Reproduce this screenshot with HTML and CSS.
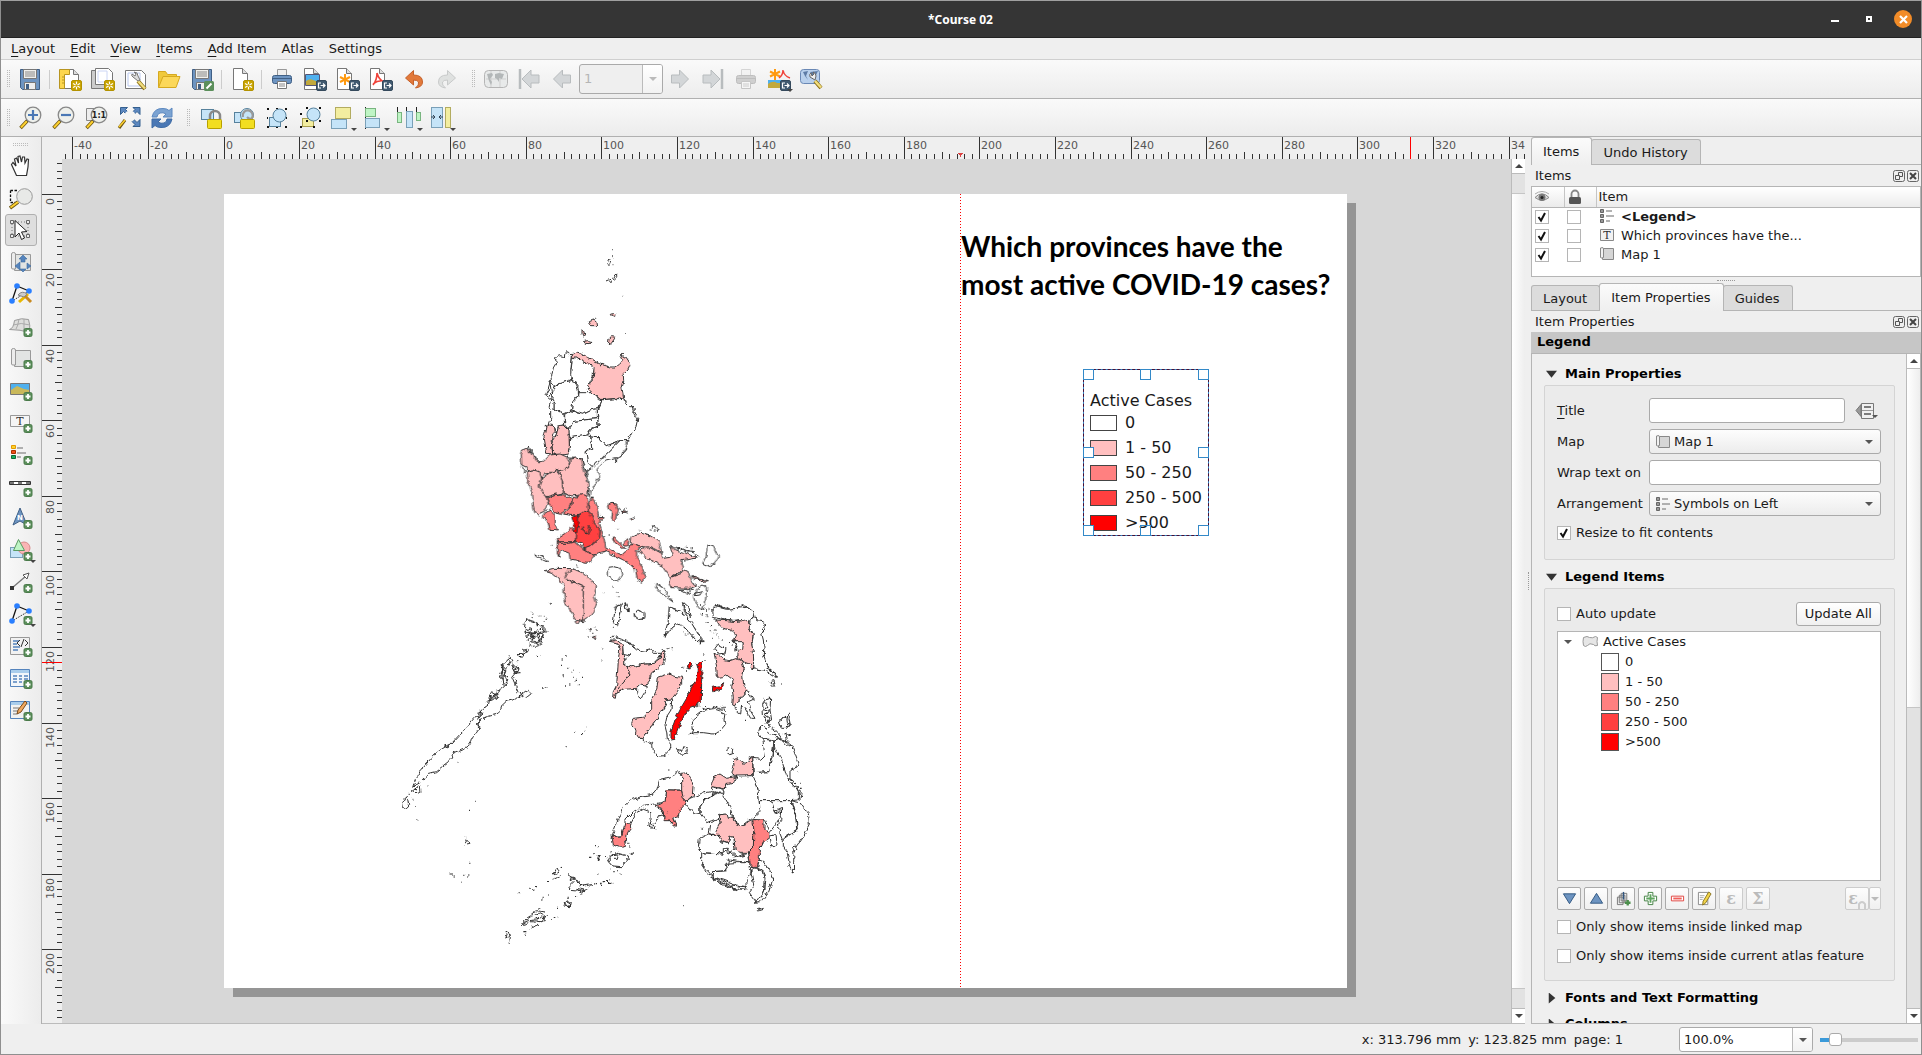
FILE: index.html
```html
<!DOCTYPE html>
<html lang="en">
<head>
<meta charset="utf-8">
<title>*Course 02</title>
<link rel="stylesheet" href="styles.css">
</head>
<body>
<svg class="defs" aria-hidden="true">
  <defs>
    <filter id="coast" x="0" y="0" width="100%" height="100%" color-interpolation-filters="sRGB"><feTurbulence type="fractalNoise" baseFrequency=".18" numOctaves="2" seed="4"/><feDisplacementMap in="SourceGraphic" scale="5" xChannelSelector="R" yChannelSelector="G"/></filter>
    <symbol id="plus" viewBox="0 0 9 9"><rect x=".5" y=".5" width="8" height="8" rx="1.5" fill="#5b8f5b" stroke="#4a7a4a"/><path d="M4.500 2v5M2 4.500h5" stroke="#fff" stroke-width="1.800"/></symbol>
    <symbol id="star" viewBox="0 0 11 11"><rect x=".5" y=".5" width="10" height="10" rx="1.500" fill="#c9a400" stroke="#b39200"/><path d="M5.500 1.500v8M2 3.500l7 4M9 3.500l-7 4" stroke="#fff" stroke-width="1.200"/><circle cx="5.500" cy="5.500" r="1.200" fill="#c9a400"/></symbol>
    <symbol id="export" viewBox="0 0 11 11"><rect x=".5" y=".5" width="10" height="10" rx="1.500" fill="#415a70" stroke="#34495c"/><path d="M5 3H2.500v5H5M4.500 5.500h4M7 3.500l2 2-2 2" stroke="#fff" fill="none" stroke-width="1.200"/></symbol>
    <symbol id="floppy" viewBox="0 0 24 24"><path d="M2.500 2.500h19v20h-17l-2-2z" fill="#6d94c1" stroke="#3f5f85"/><path d="M5.500 2.500h13v9h-13z" fill="#f0f0ec" stroke="#777"/><path d="M7 5h10M7 7h10M7 9h10" stroke="#888"/><path d="M6.500 15.500h11v7h-11z" fill="#eee" stroke="#777"/><path d="M8 17h3v5H8z" fill="#3f5f85"/></symbol>
    <symbol id="sheet" viewBox="0 0 24 24"><path d="M3.500 2.500h12l5 5v14h-17z" fill="#fff" stroke="#777"/><path d="M15.500 2.500v5h5" fill="#ddd" stroke="#777"/></symbol>
    <symbol id="page" viewBox="0 0 24 24"><path d="M4.500 1.500h9l5 5v16h-14z" fill="#fff" stroke="#777"/><path d="M13.500 1.500v5h5" fill="#ddd" stroke="#777"/></symbol>
    <symbol id="printer" viewBox="0 0 24 24"><path d="M7.500 2.500h9v7h-9z" fill="#eee" stroke="#999"/><rect x="2.500" y="8.500" width="19" height="8" rx="2" fill="#6d94c1" stroke="#3f5f85"/><path d="M3 11.500h18" stroke="#3f5f85"/><path d="M7.500 14.500h9v7h-9z" fill="#fff" stroke="#777"/><path d="M9 17h6M9 19h6" stroke="#888"/></symbol>
    <symbol id="lens" viewBox="0 0 24 24"><path d="M10 14l-7.500 8" stroke="#6b5310" stroke-width="3.500"/><path d="M9 15l-6 6.500" stroke="#fcd030" stroke-width="2"/><path d="M11 13l-2 2" stroke="#222" stroke-width="3"/><circle cx="15" cy="9" r="7.800" fill="#eef0ec" stroke="#888" stroke-width="1.300"/></symbol>
    <symbol id="lock" viewBox="0 0 24 24"><rect x="2.500" y="3.500" width="12" height="10" fill="#c5e4f8" stroke="#56819c"/><path d="M11 14V10a5 5 0 0 1 10 0v4" fill="none" stroke="#888" stroke-width="2.500"/><rect x="8.500" y="13.500" width="14" height="9" rx="1" fill="#f2de20" stroke="#b8a000"/></symbol>
    <symbol id="unlock" viewBox="0 0 24 24"><rect x="2.500" y="6.500" width="9" height="10" fill="#c5e4f8" stroke="#56819c"/><circle cx="15" cy="9" r="6.500" fill="#c5e4f8" stroke="#56819c"/><path d="M11 11a5 5 0 1 1 9 1q-2 2-5-1" fill="none" stroke="#999" stroke-width="2.200"/><rect x="8.500" y="13.500" width="14" height="9" rx="1" fill="#f2de20" stroke="#b8a000"/></symbol>
    <symbol id="nodes" viewBox="0 0 24 24"><path d="M3 19L8 4l12 5" fill="none" stroke="#111" stroke-width="1.300"/><path d="M20 9L3 19" stroke="#111" stroke-dasharray="1 1"/><g fill="#2a7fff"><circle cx="3" cy="19" r="2.800"/><circle cx="8" cy="4" r="2.800"/><circle cx="20" cy="9" r="2.800"/></g></symbol>
    <symbol id="scroll" viewBox="0 0 24 24"><path d="M5.500 4.500h16v16h-16z" fill="#e2e4e3" stroke="#999"/><path d="M2.500 4q0-1.500 2-1.500t2 1.500v15H4q-1.500 0-1.500-1z" fill="#ececec" stroke="#999"/></symbol>
    <symbol id="map16" viewBox="0 0 16 16"><path d="M3.500 2.500h11v11h-11z" fill="#d6d6d6" stroke="#888"/><path d="M1.500 2q3-1.500 3 1v8.500q-2 1-3 0z" fill="#f2f2f2" stroke="#888"/></symbol>
    <symbol id="legend16" viewBox="0 0 16 16"><g fill="#999" stroke="#666"><path d="M1.500 1.500h3v3h-3zM1.500 6.500h3v3h-3zM1.500 11.500h3v3h-3z"/></g><path d="M7 3h6M7 8h8M7 13h4" stroke="#999" stroke-width="1.600"/></symbol>
    <symbol id="first" viewBox="0 0 24 24"><path d="M3 2v20" stroke="#b8bcbe" stroke-width="2.500"/><path d="M5 12l9-9v5h8v8h-8v5z" fill="#d3d6d8" stroke="#b8bcbe"/></symbol>
    <symbol id="prev" viewBox="0 0 24 24"><path d="M3.500 12l9-9v5h8v8h-8v5z" fill="#d3d6d8" stroke="#b8bcbe"/></symbol>
    <symbol id="world" viewBox="0 0 24 24"><rect x=".5" y="3.500" width="23" height="17" rx="4" fill="#e8eaea" stroke="#b5b5b5"/><path d="M2 12h20M7 4v16M16 4v16" stroke="#cfcfcf"/><path d="M3 7l5-1 1 2-3 4 2 3-1 3-2-4zM11 7l4-1 5 1-2 5-3-1 0 4-2-3-2-1z" fill="#b3b7b8"/></symbol>
    <symbol id="float" viewBox="0 0 12 12"><rect x=".5" y=".5" width="11" height="11" rx="2" fill="none" stroke="#666"/><path d="M5.500 5V2.500h4v4H7M2.500 5.500h4v4h-4z" fill="none" stroke="#555"/></symbol>
    <symbol id="close" viewBox="0 0 12 12"><rect x=".5" y=".5" width="11" height="11" rx="2" fill="none" stroke="#666"/><path d="M3 3l6 6M9 3l-6 6" stroke="#444" stroke-width="2"/></symbol>
  </defs>
</svg>

<div class="window">
  <header class="titlebar">
    <span class="titlebar-text">*Course 02</span>
    <div class="titlebar-buttons">
      <button class="wbtn" aria-label="Minimize"><svg width="8" height="8"><path d="M0 6h8" stroke="#fff" stroke-width="2"/></svg></button>
      <button class="wbtn" aria-label="Maximize"><svg width="6" height="6"><path d="M1 1h4v4H1z" fill="none" stroke="#fff" stroke-width="2"/></svg></button>
      <button class="wbtn wbtn-close" aria-label="Close"><svg width="9" height="9"><path d="M1 1l7 7M8 1L1 8" stroke="#fff" stroke-width="2.200"/></svg></button>
    </div>
  </header>

  <nav class="menubar">
    <button><u>L</u>ayout</button><button><u>E</u>dit</button><button><u>V</u>iew</button><button><u>I</u>tems</button><button><u>A</u>dd Item</button><button>Atlas</button><button>Settings</button>
  </nav>

  <div class="toolbar">
    <span class="grip"></span>
    <button class="tool" aria-label="Save Project"><svg><use href="#floppy"/></svg></button>
    <span class="sep"></span>
    <button class="tool" aria-label="New Layout"><svg viewBox="0 0 24 24"><use href="#sheet" width="24" height="24"/><path d="M1.500 2.500h10v5h-5v14h-5z" fill="#fcd64e" stroke="#b89520"/><path d="M4 10h2M4 13h2M4 16h2" stroke="#b89520"/><use href="#star" x="13" y="13" width="11" height="11"/></svg></button>
    <button class="tool" aria-label="Duplicate Layout"><svg viewBox="0 0 24 24"><path d="M.5 3.500h17v18H.500z" fill="#ccc" stroke="#777"/><path d="M4.500 1.500h13l4 4v12h-17z" fill="#fff" stroke="#777"/><path d="M7 4h9v11H7z" fill="none" stroke="#ccd6f5"/><use href="#star" x="13" y="13" width="11" height="11"/></svg></button>
    <button class="tool" aria-label="Layout Manager"><svg viewBox="0 0 24 24"><path d="M1.500 3.500h16l4 4v14h-20z" fill="#fff" stroke="#777"/><path d="M4 6h12v13H4z" fill="none" stroke="#b9c8ee"/><path d="M14 14l7 8" stroke="#8a6d10" stroke-width="4"/><path d="M14 14l7 7.500" stroke="#f1dd7d" stroke-width="2.500"/><path d="M14 14L9 10q-2-1-1-3l3 2 1-2-2-2q4 0 4 4l2 4z" fill="#ddd" stroke="#777"/></svg></button>
    <button class="tool" aria-label="Add Items from Template"><svg viewBox="0 0 24 24"><path d="M1.500 20.500v-16h7l2 3h9v4" fill="#f0c93c" stroke="#d6a920"/><path d="M1.500 20.500L6 9.500h17l-4 11z" fill="#fcd85a" stroke="#d6a920"/></svg></button>
    <button class="tool" aria-label="Save as Template"><svg viewBox="0 0 24 24"><use href="#floppy" width="24" height="24"/><rect x="14" y="14" width="10" height="10" rx="1.500" fill="#5b8f5b"/><path d="M16.500 21.500l5-5" stroke="#fff" stroke-width="2"/></svg></button>
    <span class="sep"></span>
    <button class="tool" aria-label="Add Pages"><svg viewBox="0 0 24 24"><use href="#page" x="-1" width="24" height="24"/><use href="#star" x="13" y="13" width="11" height="11"/></svg></button>
    <span class="sep"></span>
    <button class="tool" aria-label="Print"><svg><use href="#printer"/></svg></button>
    <button class="tool" aria-label="Export as Image"><svg viewBox="0 0 24 24"><use href="#page" x="-3" width="24" height="24"/><path d="M3 8h13v10H3z" fill="#4fb0ee"/><path d="M3 14q4-3 7-1l6 2v3H3z" fill="#c2a93c"/><path d="M2.500 7.500h14v11h-14z" fill="none" stroke="#557"/><use href="#export" x="13" y="13" width="11" height="11"/></svg></button>
    <button class="tool" aria-label="Export as SVG"><svg viewBox="0 0 24 24"><use href="#page" x="-3" width="24" height="24"/><path d="M9 7v11M4 10l10 5M14 10L4 15" stroke="#ff9a10" stroke-width="2"/><use href="#export" x="13" y="13" width="11" height="11"/></svg></button>
    <button class="tool" aria-label="Export as PDF"><svg viewBox="0 0 24 24"><use href="#page" x="-3" width="24" height="24"/><path d="M8 6q2 7 7 9M8 6q0 7-4 12M4 17q5-4 11-3" fill="none" stroke="#f0433a" stroke-width="1.600"/><use href="#export" x="13" y="13" width="11" height="11"/></svg></button>
    <button class="tool" aria-label="Undo"><svg viewBox="0 0 24 24"><path d="M3.500 11l8-7.500V8q9 0 9 7 0 5-7 6 4-3 3-6-1-2-5-2v5z" fill="#e2793a" stroke="#c5602a"/></svg></button>
    <button class="tool" aria-label="Redo" disabled><svg viewBox="0 0 24 24"><path d="M20.500 11l-8-7.500V8q-9 0-9 7 0 5 7 6-4-3-3-6 1-2 5-2v5z" fill="#dfe1e0" stroke="#c8caca"/></svg></button>
    <span class="grip grip-wide"></span>
    <button class="tool" aria-label="Preview Atlas" disabled><svg><use href="#world"/></svg></button>
    <button class="tool" aria-label="First Feature" disabled><svg><use href="#first"/></svg></button>
    <button class="tool" aria-label="Previous Feature" disabled><svg><use href="#prev"/></svg></button>
    <div class="combo combo-off"><input class="combo-input" value="1" aria-label="Atlas page" disabled><button class="combo-arrow" aria-label="Pages" disabled></button></div>
    <button class="tool" aria-label="Next Feature" disabled><svg class="flip"><use href="#prev"/></svg></button>
    <button class="tool" aria-label="Last Feature" disabled><svg class="flip"><use href="#first"/></svg></button>
    <button class="tool faded" aria-label="Print Atlas" disabled><svg><use href="#printer"/></svg></button>
    <button class="tool drop" aria-label="Export Atlas"><svg viewBox="0 0 24 24"><path d="M8 2v11M3 4.500l10 5M13 4.500l-10 5" stroke="#ff9a10" stroke-width="2"/><path d="M16 3q1 6 7 8M16 3q0 5-4 8" fill="none" stroke="#f0433a" stroke-width="1.500"/><path d="M1 13h16v8H1z" fill="#4fb0ee"/><path d="M1 17q5-4 9-1h7v5H1z" fill="#c2a93c"/><use href="#export" x="13" y="13" width="11" height="11"/></svg></button>
    <button class="tool" aria-label="Atlas Settings"><svg viewBox="0 0 24 24"><rect x=".5" y="2.500" width="19" height="14" rx="3" fill="#b9d0ec" stroke="#6a88b5"/><path d="M3 5l5-1-2 5 2 4-3-4zM10 5l8-1-3 6-3-2z" fill="#5d7ba5"/><path d="M15 14l6 7" stroke="#8a6d10" stroke-width="4"/><path d="M15 14l6 6.500" stroke="#f1dd7d" stroke-width="2.500"/><path d="M15 13l-5-3q-1-3 1-4l1 3 2-2-1-2q3 1 3 4z" fill="#eee" stroke="#666"/></svg></button>
  </div>

  <div class="toolbar toolbar-view">
    <span class="grip"></span>
    <button class="tool" aria-label="Zoom In"><svg viewBox="0 0 24 24"><use href="#lens" width="24" height="24"/><path d="M15 4v10M10 9h10" stroke="#4a78b5" stroke-width="2.200"/></svg></button>
    <button class="tool" aria-label="Zoom Out"><svg viewBox="0 0 24 24"><use href="#lens" width="24" height="24"/><path d="M10 9h10" stroke="#4a78b5" stroke-width="2.200"/></svg></button>
    <button class="tool" aria-label="Zoom to 100%"><svg viewBox="0 0 24 24"><path d="M2.500 2.500h9v12h-9z" fill="#eee" stroke="#888"/><use href="#lens" width="24" height="24"/><text x="15" y="12" text-anchor="middle" class="icon-text">1:1</text></svg></button>
    <button class="tool" aria-label="Zoom Full"><svg viewBox="0 0 24 24"><path d="M3.500 1.500h7l-2 2 3 3-2 2-3-3-3 3zM23 1.500h-7l2 2-3 3 2 2 3-3 3 3zM23 20.500h-7l2-2-3-3 2-2 3 3 3-3z" fill="#5c88c0" stroke="#35608f"/><path d="M8 14l-6 8" stroke="#6b5310" stroke-width="3"/><path d="M8 14l-6 7" stroke="#fcd030" stroke-width="1.600"/><circle cx="13" cy="10" r="5.500" fill="#f5f5f3"/></svg></button>
    <button class="tool" aria-label="Refresh"><svg viewBox="0 0 24 24"><path d="M2 11Q4 2 13 2.500q4 0 6 2L22 2v9h-9l3-3q-3-2-6-1-3 1-3 4z" fill="#7ba3d2" stroke="#5c88c0"/><path d="M22 13q-2 9-11 8.500-4 0-6-2L2 22v-9h9l-3 3q3 2 6 1 3-1 3-4z" fill="#4a78b5" stroke="#3d6ba5"/></svg></button>
    <span class="grip grip-wide"></span>
    <button class="tool" aria-label="Lock Items"><svg><use href="#lock"/></svg></button>
    <button class="tool" aria-label="Unlock Items"><svg><use href="#unlock"/></svg></button>
    <button class="tool" aria-label="Group"><svg viewBox="0 0 24 24"><rect x="4.500" y="11.500" width="11" height="9" fill="#c5e4f8" stroke="#56819c"/><circle cx="14.500" cy="9.500" r="6.500" fill="#c5e4f8" stroke="#56819c"/><path d="M2 2h2v2H2zM20 2h2v2h-2zM2 20h2v2H2zM20 20h2v2h-2zM2 11h1v2H2zM21 11h1v2h-1zM11 2h2v1h-2zM11 21h2v1h-2z" fill="#111"/></svg></button>
    <button class="tool" aria-label="Ungroup"><svg viewBox="0 0 24 24"><rect x="4.500" y="12.500" width="11" height="8" fill="#f3eea0" stroke="#aaa050"/><circle cx="15.500" cy="8.500" r="6.500" fill="#c5e4f8" stroke="#56819c"/><path d="M8 1h2v2H8zM21 1h2v2h-2zM8 14h2v2H8zM21 14h2v2h-2zM2 7h2v2H2zM2 20h2v2H2zM15 20h2v2h-2z" fill="#111"/></svg></button>
    <button class="tool drop" aria-label="Raise"><svg viewBox="0 0 24 24"><rect x=".5" y="13.500" width="15" height="9" fill="#c5e4f8" stroke="#7aa0b8"/><rect x="4.500" y="1.500" width="15" height="11" fill="#f3eea0" stroke="#b3ac60"/></svg></button>
    <button class="tool drop" aria-label="Align"><svg viewBox="0 0 24 24"><path d="M1.500 1v22" stroke="#222"/><rect x="1.500" y="2.500" width="10" height="8" fill="#bff5c5" stroke="#79b580"/><rect x="1.500" y="12.500" width="14" height="9" fill="#c5e4f8" stroke="#7aa0b8"/></svg></button>
    <button class="tool drop" aria-label="Distribute"><svg viewBox="0 0 24 24"><path d="M.5 1v12M9.500 1v10M19.500 1v12" stroke="#222"/><rect x=".5" y="6.500" width="4" height="10" fill="#bff5c5" stroke="#79b580"/><rect x="9.500" y="5.500" width="6" height="16" fill="#c5e4f8" stroke="#7aa0b8"/><rect x="19.500" y="6.500" width="4" height="8" fill="#bff5c5" stroke="#79b580"/></svg></button>
    <button class="tool drop" aria-label="Resize"><svg viewBox="0 0 24 24"><rect x="1.500" y="1.500" width="11" height="20" fill="#c5e4f8" stroke="#7aa0b8"/><path d="M1 11h3M13 11h-3M3 9l2 2-2 2M11 9l-2 2 2 2" stroke="#345" fill="none"/><rect x="15.500" y="1.500" width="5" height="20" fill="#f3eea0" stroke="#b3ac60"/></svg></button>
  </div>

  <main class="main">
    <aside class="toolbox">
      <span class="grip grip-flat"></span>
      <button class="tool" aria-label="Pan"><svg viewBox="0 0 24 24"><path d="M7.500 21.500L5 16 2.500 10.500 4 8.500l3 3.500L5.500 5l2-1 2 5-.5-6.500 2-.500L12.500 8l1-5h2l.5 6 2-4 1.500.5q0 7-2 16z" fill="#fff" stroke="#333" stroke-width="1.200"/></svg></button>
      <button class="tool" aria-label="Zoom"><svg viewBox="0 0 24 24"><path d="M1.500 4.500h7M1.500 4.500v12h5" fill="none" stroke="#111" stroke-width="1.300" stroke-dasharray="2.500 1.500"/><path d="M9 16l-8 6" stroke="#6b5310" stroke-width="3.500"/><path d="M9 16l-7.500 5.500" stroke="#fcd030" stroke-width="2"/><circle cx="15.500" cy="10.500" r="7.800" fill="#e8e9e7" stroke="#999"/></svg></button>
      <button class="tool tool-on" aria-label="Select/Move Item"><svg viewBox="0 0 24 24"><path d="M3 4h16v14H3z" fill="none" stroke="#777" stroke-dasharray="1 2"/><path d="M1.500 2.500h3v3h-3zM17.500 2.500h3v3h-3zM1.500 16.500h3v3h-3zM17.500 16.500h3v3h-3z" fill="#eee" stroke="#666"/><path d="M6 2.500l12 11-5.500.5 3 6-3 1.500-2.500-6.500-4 4z" fill="#fff" stroke="#222"/></svg></button>
      <button class="tool" aria-label="Move Content"><svg viewBox="0 0 24 24"><use href="#scroll" width="24" height="24"/><path d="M14 5l4 4h-2v3h-4V9h-2zM6 16l5-4v8zM22 16l-4-3v6zM14 22l3-3h-6z" fill="#5584bd" stroke="#3b6a9d" stroke-width=".6"/></svg></button>
      <button class="tool" aria-label="Edit Nodes"><svg viewBox="0 0 24 24"><use href="#nodes" width="24" height="24"/><path d="M10 20l9-8" stroke="#e8b800" stroke-width="3"/><path d="M14 12l8 8" stroke="#c88a20" stroke-width="3"/><path d="M9 13q4-5 9-1l-3 3z" fill="#ccc" stroke="#888"/></svg></button>
      <button class="tool" aria-label="Add Map"><svg viewBox="0 0 24 24"><path d="M.5 15.500q4-1 5-9 7-3 14-1 2 5 1 13-9-3-20-3z" fill="#dededc" stroke="#999"/><path d="M4 11q8-3 17 0M10 5q-1 7-3 10M15 5v12" fill="none" stroke="#aaa"/><use href="#plus" x="14" y="14" width="10" height="9"/></svg></button>
      <button class="tool" aria-label="Add 3D Map"><svg viewBox="0 0 24 24"><use href="#scroll" width="24" height="24"/><use href="#plus" x="14" y="14" width="10" height="9"/></svg></button>
      <button class="tool" aria-label="Add Picture"><svg viewBox="0 0 24 24"><path d="M2 5h19v12H2z" fill="#4fb0ee"/><path d="M2 12l6-4 7 3 6 1v5H2z" fill="#c9b85a"/><path d="M1.500 5.500h19v11h-19z" fill="none" stroke="#777"/><use href="#plus" x="14" y="14" width="10" height="9"/></svg></button>
      <button class="tool" aria-label="Add Label"><svg viewBox="0 0 24 24"><path d="M1.500 5.500h19v11h-19z" fill="#f5f5f5" stroke="#999"/><text x="11" y="15" text-anchor="middle" class="icon-serif">T</text><use href="#plus" x="14" y="14" width="10" height="9"/></svg></button>
      <button class="tool" aria-label="Add Legend"><svg viewBox="0 0 24 24"><path d="M2.500 3.500h4v3h-4z" fill="#fbd32d" stroke="#e59a00"/><path d="M2.500 8.500h4v3h-4z" fill="#f0501a" stroke="#a83000"/><path d="M2.500 13.500h4v3h-4z" fill="#17ae60" stroke="#0d6a38"/><path d="M8 6h6M8 11h9M8 15h4" stroke="#999" stroke-width="1.500"/><use href="#plus" x="14" y="14" width="10" height="9"/></svg></button>
      <button class="tool" aria-label="Add Scale Bar"><svg viewBox="0 0 24 24"><path d="M.5 7.500h21v3H.500z" fill="#fff" stroke="#333"/><path d="M1 9h4M9 9h4M17 9h4" stroke="#777" stroke-width="2"/><use href="#plus" x="14" y="14" width="10" height="9"/></svg></button>
      <button class="tool" aria-label="Add North Arrow"><svg viewBox="0 0 24 24"><path d="M11 2l7 17-7-4-7 4z" fill="#6d94c1" stroke="#3f5f85"/><text x="11" y="14" text-anchor="middle" class="icon-n">N</text><use href="#plus" x="14" y="14" width="10" height="9"/></svg></button>
      <button class="tool drop" aria-label="Add Shape"><svg viewBox="0 0 24 24"><rect x="1.500" y="9.500" width="12" height="10" fill="#c5e4f8" stroke="#7aa0b8"/><circle cx="15" cy="10" r="6" fill="#fab5b5" stroke="#d98a8a"/><path d="M9.500 1.500l6 11h-11z" fill="#bff5c5" stroke="#5b9a62"/><use href="#plus" x="14" y="14" width="10" height="9"/></svg></button>
      <button class="tool" aria-label="Add Arrow"><svg viewBox="0 0 24 24"><path d="M3 18L17 6" stroke="#777" stroke-width="1.300"/><path d="M20 3l-2 6-4-4z" fill="#fff" stroke="#555"/><path d="M1 16h4v4H1z" fill="#333"/><use href="#plus" x="14" y="14" width="10" height="9"/></svg></button>
      <button class="tool drop" aria-label="Add Node Item"><svg viewBox="0 0 24 24"><use href="#nodes" width="24" height="24"/><use href="#plus" x="14" y="14" width="10" height="9"/></svg></button>
      <button class="tool" aria-label="Add HTML"><svg viewBox="0 0 24 24"><path d="M1.500 3.500h19v17h-19z" fill="#f2f2f2" stroke="#999"/><path d="M4 7h6M4 10h4M4 13h7M4 16h5" stroke="#5584bd" stroke-width="1.500"/><path d="M11 6l-3 3 3 3M16 6l3 3-3 3M15 5l-3 8" fill="none" stroke="#333"/><use href="#plus" x="14" y="14" width="10" height="9"/></svg></button>
      <button class="tool" aria-label="Add Fixed Table"><svg viewBox="0 0 24 24"><path d="M1.500 3.500h19v17h-19z" fill="#f2f6fa" stroke="#5584bd"/><path d="M2 4h18v3H2z" fill="#a9cdec"/><path d="M4 10h4M10 10h3M15 10h4M4 13h4M10 13h3M15 13h4M4 16h4M10 16h3" stroke="#5584bd" stroke-width="1.300"/><use href="#plus" x="14" y="14" width="10" height="9"/></svg></button>
      <button class="tool" aria-label="Add Attribute Table"><svg viewBox="0 0 24 24"><path d="M1.500 3.500h19v17h-19z" fill="#f2f2f2" stroke="#5584bd"/><path d="M2 4h18v3H2z" fill="#a9cdec"/><path d="M4 10h6M4 13h5M4 16h4" stroke="#777"/><path d="M16 3l-7 9-1 4 4-2 6-9z" fill="#f0a860" stroke="#7a4a1a"/><use href="#plus" x="14" y="14" width="10" height="9"/></svg></button>
    </aside>

    <section class="workspace">
      <div class="corner"></div>
      <svg class="ruler ruler-h" id="ruler-h" data-origin="162" data-cursor="1348"></svg>
      <svg class="ruler ruler-v" id="ruler-v" data-origin="35" data-cursor="503"></svg>
      <div class="canvas">
        <div class="paper">
          <svg class="map" viewBox="0 0 1123 794" width="1123" height="794" role="img" aria-label="Map of provinces">
            <g filter="url(#coast)">
            <!-- Northern Luzon -->
            <g transform="translate(276 36) scale(.33333)">
              <path class="c0" d="M168 381L180 377 193 380 195 370 201 365 208 374 217 373 216 390 214 405 213 420 215 435 210 452 190 458 175 462 165 470 158 462 150 458 157 448 155 435 160 418 168 405 170 394 166 390Z"/>
              <path class="c0" d="M217 385L228 379 240 388 258 396 275 403 284 412 280 425 280 435 265 466 275 488 255 492 237 490 232 486 234 462 215 452 212 430 215 405Z"/>
              <path class="c1" d="M217 373L230 367 245 370 262 382 300 402 330 411 348 411 362 400 368 388 362 380 366 372 372 381 377 380 388 396 390 407 384 420 370 433 371 455 366 475 371 503 340 506 306 509 285 498 275 488 263 466 275 455 281 435 282 412 275 405 240 388 228 380 219 387Z"/>
              <path class="c0" d="M210 452L228 460 234 475 236 497 225 504 220 518 215 535 210 545 188 553 180 545 168 543 162 535 162 522 155 510 158 485 165 470 185 460Z"/>
              <path class="c0" d="M150 458L158 462 165 470 158 485 155 510 162 520 162 537 175 545 192 553 194 585 176 588 168 612 160 590 148 585 152 565 152 545 147 530 152 510 140 500 138 490 144 478Z"/>
              <path class="c0" d="M236 497L237 488 275 488 285 500 306 509 294 535 270 540 250 550 215 540 218 515Z"/>
              <path class="c0" d="M194 553L212 542 250 550 270 540 292 536 292 566 250 570 218 575 213 590 205 597 194 585Z"/>
              <path class="c0" d="M205 597L213 590 218 575 255 570 292 566 295 587 270 600 262 616 210 624Z"/>
              <path class="c0" d="M306 509L371 505 376 520 386 530 399 530 404 538 401 550 407 560 414 562 408 590 395 610 383 632 360 632 317 649 290 620 272 618 265 607 295 588 292 540Z"/>
              <path class="c0" d="M272 618L290 620 317 649 360 632 278 712 262 700 258 665 275 655Z"/>
              <path class="c0" d="M208 624L262 615 272 622 275 655 258 665 262 695 278 712 258 727 246 686 207 684 203 672 208 655Z"/>
              <path class="c1" d="M148 585L160 586 163 610 155 638 158 672 140 670 136 645 132 620 138 590ZM175 587L192 585 207 600 208 650 203 672 180 676 158 670 155 640 168 620Z"/>
              <path class="c1" d="M268 275L280 270 288 275 290 287 272 287ZM334 250L341 248 347 254 342 259 335 256ZM325 342L327 326 335 320 347 322 342 330 332 342ZM250 335L262 332 280 335 270 341 256 340ZM246 300L250 301 254 312 250 320 246 312Z"/>
              <path class="c0" d="M320 100L326 88 333 90 328 103ZM338 146L345 134 350 132 350 140 342 149ZM319 152L326 150 334 155 328 158ZM150 460L154 485 147 500M396 528L400 540 410 556M360 672L372 656 376 640 377 662 360 682 346 695 355 676"/>
              <path class="dots" d="M337 59h2M335 77h3M338 104h2M365 199h2M285 265h2M373 310h2M248 322h2M365 378h2M300 404h3M84 647h3M92 660h3M98 670h3M106 685h3"/>
            </g>
            <!-- Central and southern Luzon, Mindoro, Bicol -->
            <g transform="translate(276 236) scale(.33333)">
              <path class="c0" d="M360 32L383 32 375 60 358 84 345 83 318 90 300 105 288 118 302 133 290 155 281 172 270 182 268 200 266 150 258 128 278 112Z"/>
              <path class="c1" d="M64 75L68 60 84 52 92 70 105 85 115 95 130 95 150 75 180 72 203 82 208 105 205 120 188 125 170 118 150 130 133 132 125 145 118 125 100 120 82 125 80 112 65 105Z"/>
              <path class="c1" d="M82 125L100 120 118 125 125 145 118 170 140 200 145 225 132 247 115 255 104 248 100 230 98 195 90 170 84 160Z"/>
              <path class="c1" d="M125 145L150 130 170 118 175 130 186 150 190 190 165 193 140 200 125 182 118 170Z"/>
              <path class="c1" d="M175 125L208 112 210 88 228 84 245 88 250 115 260 140 266 170 262 200 240 195 215 198 190 190 188 155Z"/>
              <path class="c2" d="M140 205L165 193 195 195 217 210 212 228 185 250 165 245 150 225Z"/>
              <path class="c2" d="M217 205L250 193 262 200 265 240 240 250 225 258 190 252 215 228Z"/>
              <path class="c2" d="M127 262L134 250 150 240 162 250 163 280 172 300 150 298 143 275Z"/>
              <path class="c2" d="M265 240L266 215 275 200 290 225 300 262 309 263 298 278 312 325 318 355 345 365 365 375 385 358 392 345 440 340 410 360 410 385 425 410 437 440 425 457 412 450 405 415 390 400 370 390 320 365 280 375 250 355 270 350 298 325 300 305 285 280Z"/>
              <path class="c2" d="M172 325L195 310 213 292 228 310 228 335 205 340 175 340ZM172 335L225 335 250 357 285 375 275 395 262 400 245 398 232 390 210 388 208 370 190 362 180 365 176 380 172 370Z"/>
              <path class="c3" d="M238 252L265 240 285 280 300 305 298 325 270 350 253 357 247 338 226 335 228 290 232 268Z"/>
              <path class="line" d="M246 300L250 290 256 312 262 310 266 290 271 292 268 310M226 310L228 300 236 288 246 300M222 302L232 300"/>
              <path class="c4" d="M215 262L236 255 235 275 230 307 220 302 222 280Z"/>
              <path class="c2" d="M323 225L335 220 350 222 355 240 350 265 342 272 335 265 338 248 325 238ZM362 240L378 250 368 250ZM388 266L402 260 394 267ZM338 325L345 324 378 355 368 354 345 338ZM370 335L382 325 385 345 374 345Z"/>
              <path class="c1" d="M392 325L400 315 425 310 455 320 478 338 485 368 460 355 430 350 410 345 390 340Z"/>
              <path class="c1" d="M415 362L445 350 485 372 490 385 510 382 518 370 512 345 525 360 550 366 570 375 592 384 568 388 545 392 550 410 545 425 512 442 490 410 460 395 435 380Z"/>
              <path class="c1" d="M512 442L545 430 550 418 565 425 570 445 578 460 590 468 570 475 515 473 510 460ZM575 435L600 445 625 452 605 455 575 442Z"/>
              <path class="c0" d="M622 345L640 350 650 370 655 380 645 400 630 410 608 400 618 378ZM325 412L340 410 362 415 365 435 350 455 325 440ZM105 372L120 378 135 385 145 398 125 388 108 380ZM468 460L490 475 515 510 521 517 485 492 467 470ZM548 515L560 530 573 560 558 552 550 535ZM590 478L608 465 620 470 616 520 605 540 585 515 580 500ZM536 478L580 478 560 490ZM585 490L605 485 600 495 585 497ZM346 530L364 522 362 545 352 588 342 582ZM376 520L388 540 380 542ZM402 550L415 540 432 552 434 565 415 568 403 560ZM493 622L505 580 508 532 545 545 580 590 612 635 590 630 550 590 535 577 510 600Z"/>
              <path class="c1" d="M135 422L160 415 218 416 195 445 250 470 250 575 228 570 210 540 196 520 192 500 192 465 170 440 155 428Z"/>
              <path class="c1" d="M218 416L255 432 275 455 290 465 283 500 290 520 280 545 265 565 250 575 250 470 195 445 205 425Z"/>
              <path class="c1" d="M225 575L240 568 233 585ZM265 598L275 600 272 604ZM276 622L288 618 287 626Z"/>
              <path class="c0" d="M78 590L84 570 100 575 130 590 138 605 120 615 105 602 80 608 78 598ZM80 610L100 600 115 622 95 632ZM90 640L110 625 125 640 100 650Z"/>
              <path class="dots" d="M70 118h2M72 127h3M156 346h2M208 393h3M228 408h3M352 298h2M323 315h3M418 300h2M450 300h3M460 290h4M470 300h5M462 303h4M310 488h2M338 472h2M352 486h4M355 500h3M150 520h2M94 548h2M118 558h2M130 562h3M143 568h3M72 580h3M76 605h4M140 600h2M283 590h2M290 600h3M266 618h3M338 595h3M605 555h3M618 560h3M628 540h3M630 605h3M642 600h3M650 612h2M366 248h3M376 235h3M388 265h3M520 350h5M530 358h6M545 358h4M556 352h4M565 362h6M580 365h4M572 356h3M585 372h4M90 60h3M94 66h3M100 78h3M318 362h5M578 440h6M590 448h8M548 605h3M556 612h3M566 612h3M578 622h3M590 630h3M600 636h3M568 490h4M560 484h4M650 525h4M645 535h3"/>
              <path class="line" d="M85 50L88 68 96 62 97 78 106 82 108 92M66 110L78 130M520 348L530 356 545 355 560 362 580 364 590 374 600 380M650 522L660 530 690 538 720 532M575 432L590 446 612 448M355 232L368 246 372 238 382 254M455 295L465 290 472 300"/>
            </g>
            <!-- Palawan and Sulu -->
            <g transform="translate(156 396) scale(.33333)">
              <path class="c0" d="M98 592L105 570 120 545 160 497 178 482 200 468 212 463 250 422 285 382 310 355 325 345 330 325 350 320 362 295 370 290 366 270 360 262 372 240 362 230 378 215 392 202 400 215 398 235 410 245 395 262 405 285 415 308 425 312 405 328 378 335 362 350 355 372 330 378 300 388 296 415 280 440 262 468 245 480 220 490 205 518 170 545 145 550 130 570 105 585ZM100 600L118 588 120 605 105 608ZM68 640L72 625 82 622 86 645 78 655 70 652ZM425 312L445 298 455 310 440 322 425 318Z"/>
              <path class="c0" d="M410 195L420 190 432 195 428 180 440 178 438 190ZM368 225L378 235 372 255 382 275 375 285 366 270ZM395 230L418 240 405 250ZM440 85L450 95 480 105 496 125 470 130 455 125 435 128ZM437 130L460 128 450 150ZM462 130L490 135 480 155 458 160ZM335 305L350 315 340 325 328 318ZM294 365L305 375 296 385ZM292 400L300 408 296 415Z"/>
              <path class="c0" d="M255 755L262 748 270 760 260 762ZM520 855L530 835 540 845 528 852ZM566 890L585 872 610 885 635 880 615 905 590 900 570 898ZM590 895L612 900 605 910ZM570 860L582 862 575 870ZM555 938L575 935 570 950 552 948ZM422 1005L440 985 455 975 475 970 490 978 500 985 480 998 455 995 440 1000ZM682 808L695 795 710 792 735 798 740 815 720 830 700 828ZM696 795L715 792 712 810 700 808Z"/>
              <path class="dots" d="M457 72h3M488 90h3M500 88h3M452 80h3M460 100h3M470 110h4M482 118h4M456 140h4M470 145h4M464 158h3M440 150h4M448 165h3M510 42h2M408 196h3M420 203h3M430 195h4M412 212h3M386 198h3M366 222h3M372 238h3M358 250h3M362 262h3M380 260h4M378 275h4M400 240h5M412 236h5M404 250h4M350 300h3M345 315h5M352 322h3M330 330h4M300 368h4M194 466h5M203 472h3M298 392h4M310 384h4M218 488h4M262 474h2M86 610h3M96 600h4M108 596h3M140 588h2M80 620h3M102 650h2M98 628h2M233 520h2M112 690h3M286 637h2M267 661h3M256 740h3M252 772h3M265 820h3M212 852h3M218 858h3M244 873h3M250 856h3M262 858h3M582 427h2M606 428h3M614 424h3M622 412h2M557 470h3M468 202h3M478 198h3M486 220h3M486 294h5M496 292h3M545 210h3M555 198h5M540 226h3M562 235h3M548 257h3M572 250h3M580 262h4M590 268h4M600 245h3M606 262h3M585 272h4M565 285h3M555 288h3M578 240h3M596 284h3M640 130h3M648 140h4M668 175h3M418 905h3M412 908h3M448 895h4M456 900h4M465 890h3M488 925h3M502 915h4M484 930h3M504 872h3M515 868h3M520 848h4M532 838h4M545 832h4M565 855h4M572 866h4M582 868h5M602 888h4M598 906h5M585 922h4M560 925h3M566 940h5M556 945h5M528 955h3M478 954h6M490 965h4M500 975h4M486 985h6M470 985h5M450 995h4M455 1010h3M445 1020h3M468 1005h3M430 1025h6M434 1032h4M512 990h4M522 985h4M535 982h4M380 1025h4M388 1032h4M378 1042h4M388 1052h3M386 1062h3M655 770h3M640 788h4M650 800h8M652 806h6M678 800h3M690 815h3M708 842h5M700 848h4M668 875h5M650 884h4M684 880h6M655 852h3M740 760h3M748 768h3M755 790h3"/>
              <path class="line" d="M383 1022L391 1035 389 1060M377 1045L383 1028M450 970L470 962 492 966M540 860L520 870M455 1015L470 1005 480 1010M678 870L690 882 700 880M426 1000L445 992 470 990 488 975 496 992 476 995M555 945L565 932 573 945 560 950M568 855L585 868M584 870L600 876 612 888M650 798L660 806M438 120L452 112 448 132 470 122 488 128M442 140L455 132 460 150 472 132 478 150 490 138M450 160L462 152 470 162 480 150M362 225L372 232 364 248 378 242 370 262 384 270 376 282M382 205L390 215 384 230M396 228L412 228 404 240 418 248 400 250M400 262L410 270 404 290M412 198L424 205 440 185 446 178M330 318L342 322 350 308 356 322 342 328 330 332M300 362L306 372 296 380M320 335L334 328M192 468L202 474 212 462"/>
            </g>
            <!-- Visayas and Mindanao -->
            <g transform="translate(366 396) scale(.33333)">
              <path class="c1" d="M58 154L75 149 92 150 100 165 98 185 108 230 118 245 115 260 90 295 78 310 76 325 68 322 70 305 80 285 82 260 85 210 90 175 80 158Z"/>
              <path class="c1" d="M104 225L125 230 165 222 190 220 210 205 215 188 224 185 222 215 205 235 185 248 180 270 165 290 140 295 105 298 80 310 90 290 115 260 118 245Z"/>
              <path class="c0" d="M60 150L68 138 95 148 108 155 122 165 140 180 165 184 185 178 190 190 215 190 205 205 190 220 165 222 125 230 104 225 105 205 120 195 100 190 98 165 80 150Z"/>
              <path class="c1" d="M205 262L235 252 250 258 275 262 275 280 262 305 245 327 225 330 228 345 215 365 190 400 155 450 135 425 125 400 130 385 160 382 185 358 185 330 200 300Z"/>
              <path class="c0" d="M228 345L225 330 245 327 243 360 230 380 225 405 230 425 232 448 243 465 238 480 222 497 205 499 190 485 188 460 170 455 155 450 190 400 215 365ZM140 295L152 284 172 290 165 310 155 328 145 320 140 305Z"/>
              <path class="c4" d="M320 222L338 216 336 240 335 270 334 335 320 345 300 352 285 368 275 395 265 420 255 448 243 450 243 425 255 390 275 350 290 325 305 290 320 270 325 240ZM292 225L300 216 305 232 296 234ZM367 292L385 288 402 278 392 298 368 305Z"/>
              <path class="c0" d="M303 400L310 388 325 375 345 360 370 356 388 362 405 370 402 390 405 405 388 425 370 432 340 428 312 428 300 435 308 420ZM262 478L275 482 278 470 292 475 290 490 272 493ZM410 480L418 472 430 480 430 492 418 494ZM375 175L385 162 408 175 405 192 390 195ZM75 65L80 50 97 40 92 65 85 100 78 105 70 95ZM105 42L115 55 118 62 108 60ZM133 70L145 62 165 68 165 82 145 86 135 78ZM222 135L235 95 238 52 275 65 305 100 338 155 318 150 300 130 270 98 250 110ZM278 35L295 50 304 80 292 72 282 55Z"/>
              <path class="c0" d="M368 55L378 50 410 58 440 55 470 52 490 62 495 80 480 88 470 100 450 92 430 95 405 90 370 82Z"/>
              <path class="c1" d="M378 90L410 92 440 95 475 88 478 112 490 135 485 160 492 190 490 237 478 222 458 215 440 200 442 185 458 175 460 155 430 155 440 135 425 120 400 115 388 105Z"/>
              <path class="c0" d="M480 88L495 80 500 92 520 95 527 118 515 130 520 150 522 170 520 195 530 225 545 238 560 262 540 250 520 240 492 237 490 190 485 160 490 135 478 112Z"/>
              <path class="c1" d="M372 190L385 195 400 208 420 212 440 205 455 212 462 235 458 260 462 290 475 300 455 320 445 325 440 350 428 345 430 320 425 290 430 270 410 255 395 260 382 262 380 230Z"/>
              <path class="c0" d="M432 350L445 330 462 318 470 300 480 312 490 328 475 335 480 360 495 385 482 385 465 355 455 345 452 372 445 368ZM540 275L552 272 556 288 545 288ZM518 340L525 330 542 325 540 360 545 390 530 395 520 375ZM568 395L580 385 595 372 600 400 590 415 575 415ZM565 445L590 455 585 430 600 435"/>
              <path class="c0" d="M510 408L518 402 535 430 555 437 568 445 552 450 518 445 505 425ZM518 447L552 452 550 470 545 505 540 545 490 548 488 505 512 508 525 495Z"/>
              <path class="c0" d="M552 452L568 445 590 470 605 465 625 520 615 535 600 540 600 562 625 590 625 630 600 632 508 632 502 590 490 560 490 548 540 545 542 520 550 500ZM552 452L555 475 575 510 590 560 612 590"/>
              <path class="c1" d="M430 510L440 505 462 520 478 512 478 500 488 505 488 555 468 560 438 560 425 550 432 525ZM365 580L372 560 390 552 410 565 435 560 430 580 408 580 402 597 380 592 365 590Z"/>
              <path class="c0" d="M408 582L435 575 440 558 488 557 502 590 508 635 512 665 500 682 485 685 455 707 435 695 425 662 400 622 402 600Z"/>
              <path class="c0" d="M508 632L545 632 552 665 575 655 572 680 560 700 540 725 525 690 488 685 510 665ZM545 632L603 632 618 680 622 720 578 748 562 708 572 695 575 660 555 670ZM603 632L630 638 645 660 655 668 658 705 640 740 625 762 612 780 610 848 600 830 592 790 580 770 580 750 620 722 618 685Z"/>
              <path class="c1" d="M275 550L288 549 302 562 312 590 310 615 295 628 278 630 273 605Z"/>
              <path class="c2" d="M230 602L275 604 280 625 288 640 270 660 265 680 248 685 258 708 250 708 240 692 222 692 220 665 212 655 195 648 225 635Z"/>
              <path class="c0" d="M275 603L275 555 260 545 245 560 210 568 200 600 190 612 150 620 120 632 100 650 88 680 80 700 66 738 95 738 105 712 105 690 130 665 165 645 195 642 225 635 230 602ZM120 700L135 672 160 658 180 665 180 690 195 715 185 718 180 700 175 705M195 700L205 678 222 675 220 690"/>
              <path class="c2" d="M66 740L95 738 105 700 122 702 125 712 108 735 105 765 88 772 70 765Z"/>
              <path class="c0" d="M285 638L300 625 335 610 365 605 365 590 400 598 398 610 375 608 345 630 330 650 330 670 308 668ZM330 670L330 650 345 630 375 605 400 615 425 660 430 680 410 685 390 672 385 685 365 692 350 698Z"/>
              <path class="c1" d="M388 675L408 672 412 685 432 682 438 700 455 707 490 690 492 790 450 790 435 782 432 745 420 745 415 762 390 748 385 732 360 740 355 728 375 720 390 700Z"/>
              <path class="c2" d="M488 686L522 687 522 720 540 728 538 745 520 755 508 780 508 810 502 832 480 832 478 800 475 785 490 770 492 720Z"/>
              <path class="c0" d="M358 728L362 700 388 682 390 700 378 722 370 735ZM335 788L325 770 328 745 355 732 385 735 395 755 415 762 420 738 432 745 435 778 415 792 412 775 400 775 400 792ZM335 788L400 792 415 780 440 800 475 790 480 818 435 818 405 820 410 842 368 845 375 865 335 825ZM375 865L368 845 410 842 415 810 475 818 490 835 470 870 472 890 440 885 400 870ZM378 862L420 885 465 890 470 900 440 900 400 885 372 868M336 825L350 850 380 870 430 895 465 902M480 832L502 835 520 845 525 865 520 905 500 938 478 908 492 890 488 870ZM502 832L508 810 520 815 540 845 548 870 535 905 510 938 495 940 522 900 522 865 518 845ZM608 768L620 765 622 780 612 785ZM540 738L555 735 558 765 545 768ZM502 962L520 955 515 962 505 965Z"/>
              <path class="c0" d="M55 812L68 795 85 790 112 798 115 810 95 830 70 828ZM66 797L85 795 82 808 72 808"/>
              <path class="dots" d="M105 150h4M118 160h5M124 166h5M130 172h5M150 184h5M190 182h4M215 180h4M225 195h4M230 176h3M226 205h4M220 222h4M222 140h2M245 176h3M280 232h3M288 240h3M290 232h3M345 210h2M330 158h3M350 100h3M360 110h3M330 45h3M348 60h3M336 70h3M350 75h3M340 55h3M375 45h5M385 50h5M400 50h4M455 45h6M468 50h6M480 50h3M520 105h4M515 118h4M528 150h3M518 125h3M430 150h4M425 165h3M436 172h6M434 180h5M420 155h3M440 190h3M370 130h3M380 135h3M385 140h3M395 150h3M365 145h3M340 195h3M335 355h4M345 350h4M352 358h4M368 352h4M378 350h4M388 355h4M400 352h4M404 360h4M320 345h8M322 352h3M306 432h4M376 290h5M394 285h3M530 235h5M542 240h5M534 250h3M548 282h5M560 260h3M577 282h2M520 325h3M536 322h4M528 350h5M520 360h4M530 370h6M526 382h5M530 395h6M538 405h4M525 400h4M535 412h3M565 390h4M585 380h4M590 400h5M596 408h3M572 405h4M575 430h4M550 415h4M572 448h3M595 450h3M235 540h3M255 528h2M250 548h3M268 545h3M230 668h3M235 690h4M240 698h4M190 700h4M188 708h4M182 715h4M115 760h3M122 792h4M62 785h3M12 770h3M20 800h8M24 808h4M0 805h4M60 838h3M78 842h4M92 852h3M30 880h5M42 874h3M55 870h3M62 880h4M15 882h4M5 888h4M35 886h4M280 950h2M595 568h6M598 580h6M608 590h6M620 600h6M628 580h4M630 595h5M625 612h5M632 622h4M622 545h3M465 388h3M235 175h3M38 178h2M35 210h2M320 440h2M238 496h2M335 715h3M605 848h4M505 958h5M425 740h3M428 800h10"/>
              <path class="line" d="M370 48L380 46 390 54 404 50 418 58M455 46L470 50 482 60M522 335L532 345 524 356 538 362 528 376 540 384 532 400 546 412M575 388L590 378 592 395 605 405 588 410M548 418L562 428 575 446 590 452 600 464 612 468M598 565L612 572 604 585 620 590 628 606 634 602 630 630M112 155L126 164 140 176 150 184M218 182L228 190 222 204 230 210M428 150L440 165 434 178 446 186M335 352L352 358 372 350 390 358 404 356M528 232L545 240 562 262"/>
            </g>
            </g>
          </svg>
          <h1 class="map-title">Which provinces have the<br>most active COVID-19 cases?</h1>
          <div class="legend">
            <p class="legend-title">Active Cases</p>
            <ul class="legend-list">
              <li><i class="sw sw0"></i>0</li>
              <li><i class="sw sw1"></i>1 - 50</li>
              <li><i class="sw sw2"></i>50 - 250</li>
              <li><i class="sw sw3"></i>250 - 500</li>
              <li><i class="sw sw4"></i>&gt;500</li>
            </ul>
            <i class="handle tl"></i><i class="handle tc"></i><i class="handle tr"></i>
            <i class="handle ml"></i><i class="handle mr"></i>
            <i class="handle bl"></i><i class="handle bc"></i><i class="handle br"></i>
          </div>
          <div class="guide"></div>
        </div>
      </div>
      <div class="vscroll"><button class="arrow up" aria-label="Scroll up"></button><div class="groove groove-canvas"><div class="thumb"></div></div><button class="arrow down" aria-label="Scroll down"></button></div>
    </section>

    <div class="splitter"><span></span></div>

    <aside class="dock">
      <div class="tabs"><button class="tab tab-on">Items</button><button class="tab">Undo History</button></div>
      <div class="dock-title"><span>Items</span><button aria-label="Float"><svg><use href="#float"/></svg></button><button aria-label="Close"><svg><use href="#close"/></svg></button></div>
      <div class="items-box">
        <table class="items">
          <thead><tr>
            <th class="col-icon"><svg width="16" height="16" aria-label="Visible"><path d="M1 8.500Q8 1 15 8.500 8 14 1 8.500z" fill="#ddd" stroke="#888"/><circle cx="8" cy="8.500" r="3.500" fill="#777"/><circle cx="8" cy="8.500" r="1.500" fill="#222"/><path d="M1 5q7-5 14 0" stroke="#aaa" fill="none"/></svg></th>
            <th class="col-icon"><svg width="16" height="16" aria-label="Locked"><path d="M4.500 8V5a3.500 3.500 0 0 1 7 0v3" fill="none" stroke="#888" stroke-width="1.800"/><rect x="2" y="8" width="12" height="7" rx="1.500" fill="#555"/></svg></th>
            <th>Item</th></tr></thead>
          <tbody>
            <tr><td><input type="checkbox" checked aria-label="Show Legend"></td><td><input type="checkbox" aria-label="Lock Legend"></td><td class="name strong"><svg><use href="#legend16"/></svg>&lt;Legend&gt;</td></tr>
            <tr><td><input type="checkbox" checked aria-label="Show label"></td><td><input type="checkbox" aria-label="Lock label"></td><td class="name"><svg viewBox="0 0 16 16"><path d="M1.500 2.500h13v11h-13z" fill="#f2f2f2" stroke="#888"/><text x="8" y="12" text-anchor="middle" class="icon-serif">T</text></svg>Which provinces have the...</td></tr>
            <tr><td><input type="checkbox" checked aria-label="Show Map 1"></td><td><input type="checkbox" aria-label="Lock Map 1"></td><td class="name"><svg><use href="#map16"/></svg>Map 1</td></tr>
          </tbody>
        </table>
      </div>
      <div class="hsplit"><span></span></div>
      <div class="tabs"><button class="tab">Layout</button><button class="tab tab-on">Item Properties</button><button class="tab">Guides</button></div>
      <div class="dock-title"><span>Item Properties</span><button aria-label="Float"><svg><use href="#float"/></svg></button><button aria-label="Close"><svg><use href="#close"/></svg></button></div>
      <h2 class="item-name">Legend</h2>
      <div class="props">
        <div class="props-body">
          <button class="section open">Main Properties</button>
          <div class="group group-main">
            <div class="form">
              <label for="title"><u>T</u>itle</label>
              <div class="field-row"><input id="title" class="field"><button class="override" aria-label="Data defined override"><svg width="24" height="18"><path d="M1 8.500l5-6v12z" fill="#999" stroke="#777"/><path d="M6.500 1.500h12v15h-12z" fill="#f0f0f0" stroke="#777"/><path d="M9 5h7M9 12h7" stroke="#555" stroke-width="1.500"/><path d="M7 8.500h11" stroke="#999"/><path d="M17 13h6l-3 3z" fill="#555"/></svg></button></div>
              <label for="mapsel">Map</label>
              <div class="select"><svg><use href="#map16"/></svg><select id="mapsel"><option>Map 1</option></select></div>
              <label for="wrap">Wrap text on</label>
              <input id="wrap" class="field">
              <label for="arr">Arrangement</label>
              <div class="select"><svg><use href="#legend16"/></svg><select id="arr"><option>Symbols on Left</option></select></div>
            </div>
            <label class="check"><input type="checkbox" checked>Resize to fit contents</label>
          </div>
          <button class="section open">Legend Items</button>
          <div class="group group-items">
            <div class="auto-row"><label class="check"><input type="checkbox">Auto update</label><button class="push">Update All</button></div>
            <div class="tree">
              <div class="tree-root"><i class="twist"></i><svg width="18" height="14"><path d="M2.500 2.500q4-2 6 0 3 1 6-1l2 1q-1 4 0 8-3 1-4-1-4-2-6 1-2 2-4 0-1-4 0-8z" fill="#e6e6e6" stroke="#999"/></svg>Active Cases</div>
              <ul>
                <li><i class="box sw0"></i>0</li>
                <li><i class="box sw1"></i>1 - 50</li>
                <li><i class="box sw2"></i>50 - 250</li>
                <li><i class="box sw3"></i>250 - 500</li>
                <li><i class="box sw4"></i>&gt;500</li>
              </ul>
            </div>
            <div class="tree-tools">
              <button class="mini" aria-label="Move down"><svg viewBox="0 0 16 16"><path d="M1.500 3h13L8 13.500z" fill="#6d94c1" stroke="#2f5580"/></svg></button>
              <button class="mini" aria-label="Move up"><svg viewBox="0 0 16 16"><path d="M1.500 13h13L8 2.500z" fill="#6d94c1" stroke="#2f5580"/></svg></button>
              <button class="mini" aria-label="Add group"><svg viewBox="0 0 16 16"><path d="M1.500 6.500h6v8h-6zM3.500 4.500h6v8h-6zM5.500 2.500h6v8h-6z" fill="#eee" stroke="#777"/><path d="M8 1v8" stroke="#2f5580" stroke-width="1.500"/><path d="M12.500 9.500v6M9.500 12.500h6" stroke="#4c8f4c" stroke-width="2.500"/></svg></button>
              <button class="mini" aria-label="Add layer"><svg viewBox="0 0 16 16"><path d="M5.500 1.500h5v4h4v5h-4v4h-5v-4h-4v-5h4z" fill="#fff" stroke="#3f7f3f"/><path d="M8 3.500v9M3.500 8h9" stroke="#5fa55f" stroke-width="2"/></svg></button>
              <button class="mini" aria-label="Remove layer"><svg viewBox="0 0 16 16"><path d="M1.500 5.500h13v5h-13z" fill="#fff" stroke="#e0403c"/><path d="M3.500 8h9" stroke="#f0605c" stroke-width="2"/></svg></button>
              <button class="mini" aria-label="Edit"><svg viewBox="0 0 16 16"><path d="M1.500 1.500h10v13h-10z" fill="#fff" stroke="#888"/><path d="M3 5h5M3 7h4M3 9h3" stroke="#aaa"/><path d="M12.500 1l2.500 2-6 10-3 2 .5-4z" fill="#f3d548" stroke="#8a7420"/></svg></button>
              <button class="mini off" aria-label="Expression" disabled>ε</button>
              <button class="mini off" aria-label="Count" disabled>Σ</button>
              <button class="mini off right" aria-label="Filter" disabled>ε<svg class="funnel" width="8" height="8"><path d="M1 8V3q3-4 6 0v5" fill="none" stroke="#ccc" stroke-width="2"/></svg></button><button class="mini thin" aria-label="Filter menu" disabled></button>
            </div>
            <label class="check"><input type="checkbox">Only show items inside linked map</label>
            <label class="check check-last"><input type="checkbox">Only show items inside current atlas feature</label>
          </div>
          <button class="section">Fonts and Text Formatting</button>
          <button class="section section-next">Columns</button>
        </div>
        <div class="vscroll"><button class="arrow up" aria-label="Scroll up"></button><div class="groove"><div class="thumb thumb-half"></div></div><button class="arrow down" aria-label="Scroll down"></button></div>
      </div>
    </aside>
  </main>

  <footer class="status">
    <span class="coord">x: 313.796 mm</span><span class="coord">y: 123.825 mm</span><span class="coord">page: 1</span>
    <div class="combo combo-zoom"><input class="combo-input" value="100.0%" aria-label="Zoom level"><button class="combo-arrow" aria-label="Zoom presets"></button></div>
    <input type="range" class="zoom" aria-label="Zoom" min="0" max="100" value="10">
  </footer>
</div>
<script src="rulers.js"></script>
</body>
</html>
```
FILE: styles.css
```css
* { box-sizing: border-box; }
html, body { height: 100%; }
body { margin: 0; font: 13px/16px "DejaVu Sans", sans-serif; color: #1a1a1a; background: #efefef; overflow: hidden; }
button, input, select { font: inherit; color: inherit; }
button { border: 0; padding: 0; background: none; }
p, h1, h2, ul { margin: 0; padding: 0; }
ul { list-style: none; }
u { text-underline-offset: 3px; }
.defs { position: absolute; width: 0; height: 0; }

.window { display: flex; flex-direction: column; height: 100vh; border: 1px solid #8f8f8f; border-top-color: #a0a0a0; }

.titlebar { display: flex; align-items: center; height: 37px; flex: none; background: #353535; border-bottom: 1px solid #222; color: #fff; padding-right: 9px; }
.titlebar-text { flex: 1; text-align: center; font: bold 12px/16px "Noto Sans", sans-serif; padding: 1px 0 0 118px; }
.titlebar-buttons { display: flex; gap: 16px; width: 110px; justify-content: flex-end; }
.wbtn { display: grid; place-items: center; width: 18px; height: 18px; }
.wbtn-close { background: #f28c28; border-radius: 50%; }

.menubar { display: flex; flex: none; height: 22px; border-bottom: 1px solid #cfcfcf; padding-left: 2px; }
.menubar button { padding: 1px 7px 0 8px; }

.toolbar { display: flex; align-items: center; flex: none; height: 39px; border-bottom: 1px solid #b0b0b0; background: linear-gradient(#fafafa, #ececec); }
.toolbar-view { height: 38px; }
.tool { display: grid; place-items: center; width: 33px; height: 32px; position: relative; flex: none; }
.tool svg { width: 24px; height: 24px; display: block; }
.tool svg.flip { transform: scaleX(-1); }
.faded { filter: grayscale(1); opacity: .35; }
.drop::after { content: ""; position: absolute; right: 2px; bottom: 3px; border: 3px solid transparent; border-top-color: #444; border-bottom: 0; }
.icon-text { font: bold 8px "DejaVu Sans", sans-serif; fill: #222; }
.icon-serif { font: 11px "DejaVu Serif", serif; fill: #333; }
.icon-n { font: bold 7px "DejaVu Sans", sans-serif; fill: #fff; }
.sep { width: 7px; height: 19px; flex: none; background: linear-gradient(#ccc, #ccc) center / 1px 100% no-repeat; }
.grip { width: 12px; height: 18px; flex: none; background: conic-gradient(#bbb 25%, transparent 0) 0 0 / 2px 2px content-box; padding: 0 3px 0 5px; }
.grip-wide { width: 16px; padding: 0 4px 0 8px; }
.grip-flat { width: 22px; height: 12px; padding: 5px 3px 3px 2px; }

.combo { display: flex; flex: none; height: 30px; border: 1px solid #aaa; border-radius: 3px; background: #fff; overflow: hidden; }
.combo-off { width: 84px; margin: 0 0 0 1px; background: #efefef; color: #b5b5b5; }
.combo-input { flex: 1; min-width: 0; border: 0; background: none; padding: 0 4px; outline: 0; }
.combo-arrow { width: 20px; border-left: 1px solid #bbb; display: grid; place-items: center; background: linear-gradient(#fff, #f2f2f2); }
.combo-arrow::after { content: ""; border: 4px solid transparent; border-top-color: #555; border-bottom: 0; }
.combo-off .combo-arrow::after { border-top-color: #bbb; }

.main { display: flex; flex: 1; min-height: 0; }
.toolbox { display: flex; flex-direction: column; align-items: center; width: 41px; flex: none; border-right: 1px solid #b0b0b0; background: linear-gradient(90deg, #fafafa, #ececec); padding-top: 1px; }
.tool-on { width: 32px; border: 1px solid #b0b0b0; border-radius: 3px; background: #dedede; }

.workspace { flex: 1; min-width: 0; display: grid; grid-template: 22px 1fr / 20px 1fr 14px; border-bottom: 1px solid #bbb; }
.ruler { display: block; width: 100%; height: 100%; overflow: hidden; shape-rendering: crispEdges; }
.ruler-h { grid-column: 2 / 4; }
.ruler text { font-size: 11px; fill: #555; }
.ruler-v { min-height: 0; contain: size; }
.canvas { background: #d7d7d7; overflow: hidden; min-height: 0; position: relative; }
.paper { position: absolute; left: 162px; top: 35px; width: 1123px; height: 794px; background: #fff; box-shadow: 9px 9px #959595; }
.map { position: absolute; inset: 0; }
.map path { stroke: #333; stroke-width: 3; stroke-linejoin: round; }
.map .line { fill: none; }
.map .dots { fill: none; stroke: #333; stroke-width: 4; }
.c0 { fill: #fff; } .c1 { fill: #ffbfbf; } .c2 { fill: #ff8080; } .c3 { fill: #ff4040; } .c4 { fill: #f00; }
.map-title { position: absolute; left: 737px; top: 33px; font: bold 28px/38px Lato, sans-serif; color: #000; white-space: nowrap; }
.guide { position: absolute; left: 736px; top: 0; bottom: 0; width: 1px; background: repeating-linear-gradient(#f00 0 1px, transparent 1px 3px); }

.legend { position: absolute; left: 859px; top: 175px; width: 126px; height: 167px; padding: 21px 0 0 6px; border: 1px dashed #4a0f35; background: linear-gradient(#fff, #fff) padding-box, linear-gradient(#3389c8, #3389c8) border-box; font-size: 16px; line-height: 20px; }
.legend-list { display: grid; gap: 5px; margin-top: 2px; }
.legend-list li { display: flex; align-items: center; gap: 8px; white-space: nowrap; }
.sw { width: 27px; height: 16px; border: 1px solid #444; }
.sw0 { background: #fff; } .sw1 { background: #ffbfbf; } .sw2 { background: #ff8080; } .sw3 { background: #ff4040; } .sw4 { background: #f00; }
.handle { position: absolute; width: 11px; height: 11px; background: #fff; border: 1px solid #3389c8; }
.bc { background: none; }
.tl, .ml, .bl { left: -1px; } .tr, .mr, .br { right: -1px; } .tc, .bc { left: 56px; }
.tl, .tc, .tr { top: -1px; } .ml, .mr { top: 77px; } .bl, .bc, .br { bottom: -1px; }

.vscroll { display: flex; flex-direction: column; width: 14px; flex: none; border-left: 1px solid #bbb; background: #fff; }
.arrow { height: 14px; flex: none; display: grid; place-items: center; }
.arrow::after { content: ""; border: 4px solid transparent; }
.up::after { border-bottom-color: #444; border-top: 0; }
.down::after { border-top-color: #444; border-bottom: 0; }
.groove { flex: 1; border: solid #bbb; border-width: 1px 0; background: #e2e2e2; }
.groove-canvas { padding: 19px 0; }
.thumb { height: 100%; border: solid #c5c5c5; border-width: 1px 0; background: linear-gradient(90deg, #fff, #eee); }
.thumb-half { height: 53%; border-top: 0; }

.splitter { width: 6px; flex: none; display: grid; place-items: center; }
.splitter span { width: 1px; height: 18px; border-left: 1px dotted #999; }
.hsplit { height: 6px; display: grid; place-items: center; }
.hsplit span { width: 18px; height: 1px; border-top: 1px dotted #999; }

.dock { width: 390px; flex: none; display: flex; flex-direction: column; min-height: 0; }
.tabs { display: flex; align-items: flex-end; height: 28px; flex: none; border-bottom: 1px solid #b5b5b5; padding-top: 1px; }
.tab { height: 25px; padding: 2px 12px 0 11px; border: 1px solid #b5b5b5; border-bottom: 0; border-radius: 3px 3px 0 0; background: #dcdcdc; margin-left: -1px; }
.tab:first-child { margin-left: 0; }
.tab-on { height: 28px; margin-bottom: -1px; background: linear-gradient(#fbfbfb, #efefef); padding-top: 0; }
.dock-title { display: flex; align-items: center; height: 21px; flex: none; gap: 2px; padding: 0 2px 0 4px; }
.dock-title span { flex: 1; }
.dock-title button, .dock-title svg { display: block; width: 12px; height: 12px; }

.items-box { height: 91px; flex: none; border: 1px solid #b5b5b5; background: #fff; }
.items { width: 100%; border-collapse: collapse; table-layout: fixed; }
.items th { height: 20px; padding: 0 2px; text-align: left; font-weight: normal; border-right: 1px solid #c5c5c5; border-bottom: 1px solid #b5b5b5; background: linear-gradient(#fff, #ebebeb); }
.items th:last-child { border-right: 0; }
.items th svg { display: block; }
.items .col-icon { width: 32px; }
.items td { height: 19px; padding: 0 3px; }
.items td input { display: block; }
.name svg { width: 16px; height: 16px; vertical-align: -3px; margin-right: 6px; }
.strong { font-weight: bold; }
.items .name { line-height: 18px; }

input[type="checkbox"] { appearance: none; margin: 0; width: 14px; height: 14px; flex: none; border: 1px solid #b5b5b5; background: #fff; }
input[type="checkbox"]:checked { background: #fff url("data:image/svg+xml,%3Csvg xmlns='http://www.w3.org/2000/svg' width='12' height='12'%3E%3Cpath d='M2.500 6l2.500 3.500L9 2' fill='none' stroke='%23111' stroke-width='2'/%3E%3C/svg%3E") center no-repeat; }

.item-name { flex: none; height: 22px; padding: 2px 6px; background: #c6c6c6; border-bottom: 1px solid #b5b5b5; font-size: 13px; line-height: 16px; color: #000; }
.props { display: flex; flex: 1; min-height: 0; border: 1px solid #b5b5b5; border-top: 0; }
.props-body { flex: 1; min-width: 0; overflow: hidden; padding: 10px 11px 0 12px; }
.section { display: flex; align-items: center; height: 20px; margin-bottom: 1px; padding-left: 2px; font-weight: bold; color: #000; }
.section::before { content: ""; width: 11px; height: 11px; margin-right: 8px; background: #333; clip-path: polygon(25% 0, 85% 50%, 25% 100%); }
.section.open::before { clip-path: polygon(0 20%, 100% 20%, 50% 85%); }
.section-next { margin-top: 6px; }
.group { border: 1px solid #d4d4d4; border-radius: 2px; background: #ebebeb; padding: 12px 13px 0 12px; margin-bottom: 7px; }
.group-main { height: 175px; }
.group-items { height: 393px; }
.form { display: grid; grid-template-columns: 92px 1fr; row-gap: 6px; align-items: center; margin-bottom: 9px; }
.field { width: 100%; height: 25px; border: 1px solid #aaa; border-radius: 3px; background: #fff; min-width: 0; }
.field-row { display: flex; gap: 8px; }
.override { width: 28px; flex: none; display: grid; place-items: center; }
.select { display: flex; align-items: center; height: 25px; border: 1px solid #aaa; border-radius: 3px; padding-left: 5px; background: linear-gradient(#fdfdfd, #ececec); }
.select svg { width: 16px; height: 16px; flex: none; }
.select select { flex: 1; height: 23px; appearance: none; border: 0; outline: 0; padding-left: 3px; background: url("data:image/svg+xml,%3Csvg xmlns='http://www.w3.org/2000/svg' width='8' height='4'%3E%3Cpath d='M0 0h8L4 4z' fill='%23555'/%3E%3C/svg%3E") right 7px center no-repeat; }
.check { display: flex; align-items: center; gap: 5px; line-height: 16px; white-space: nowrap; }
.check-last { margin-top: 13px; }
.auto-row { display: flex; justify-content: space-between; align-items: center; height: 25px; }
.push { height: 24px; padding: 0 8px; border: 1px solid #aaa; border-radius: 3px; background: linear-gradient(#fff, #f0f0f0); }
.tree { height: 250px; margin: 5px 0 6px; border: 1px solid #b5b5b5; background: #fff; }
.tree-root, .tree li { display: flex; align-items: center; height: 20px; }
.tree-root svg { margin: 0 4px 0 9px; }
.twist { margin-left: 6px; border: 4px solid transparent; border-top-color: #555; border-bottom: 0; }
.tree li { padding-left: 43px; gap: 6px; }
.box { width: 18px; height: 18px; border: 1px solid #555; }
.tree-tools { display: flex; gap: 3px; margin-bottom: 9px; }
.mini { width: 24px; height: 23px; display: grid; place-items: center; border: 1px solid #aaa; border-radius: 2px; background: linear-gradient(#fdfdfd, #f0f0f0); }
.mini svg { width: 15px; height: 15px; }
.off { display: flex; justify-content: center; align-items: center; border-color: #ccc; color: #bbb; font: bold 16px/16px "DejaVu Serif", serif; }
.mini .funnel { width: 8px; height: 8px; align-self: flex-end; }
.right { margin-left: auto; margin-right: -3px; }
.thin { width: 12px; border-color: #ccc; }
.thin::after { content: ""; border: 4px solid transparent; border-top-color: #bbb; border-bottom: 0; }

.status { display: flex; align-items: center; flex: none; height: 30px; padding: 1px 3px 0 0; justify-content: flex-end; }
.coord { margin-right: 7px; }
.combo-zoom { width: 134px; height: 25px; margin: 0 7px 0 49px; }
.zoom { appearance: none; width: 98px; height: 14px; margin: 0; background: linear-gradient(90deg, #3b9ad9 18px, #ccc 18px) center / 100% 4px no-repeat; }
.zoom::-webkit-slider-thumb { appearance: none; width: 13px; height: 13px; border: 1px solid #aaa; border-radius: 3px; background: #fff; }
```
FILE: rulers.js
```js
// Draws the millimetre rulers along the top and left of the canvas.
const PX_PER_MM = 96 / 25.4;
const NS = 'http://www.w3.org/2000/svg';

function add(svg, name, attrs, text) {
  const el = document.createElementNS(NS, name);
  for (const key in attrs) el.setAttribute(key, attrs[key]);
  if (text !== undefined) el.textContent = text;
  svg.appendChild(el);
}

function drawRuler(svg, vertical) {
  svg.replaceChildren();
  const length = vertical ? svg.clientHeight : svg.clientWidth;
  const depth = vertical ? svg.clientWidth : svg.clientHeight;
  const origin = Number(svg.dataset.origin);
  const cursor = Number(svg.dataset.cursor);
  const tick = (pos, size, color) => add(svg, 'rect', vertical
    ? { x: depth - size, y: pos, width: size, height: 1, fill: color }
    : { x: pos, y: depth - size, width: 1, height: size, fill: color });

  const start = Math.ceil(-origin / PX_PER_MM / 2) * 2;
  for (let mm = start; origin + mm * PX_PER_MM < length; mm += 2) {
    const pos = Math.floor(origin + mm * PX_PER_MM);
    tick(pos, mm % 20 === 0 ? depth : mm % 10 === 0 ? 7 : 5, '#333');
    if (mm % 20 !== 0) continue;
    add(svg, 'text', vertical
      ? { transform: `translate(12 ${pos + 4}) rotate(-90)`, 'text-anchor': 'end' }
      : { x: pos + 2, y: 12 }, mm);
  }
  tick(cursor, depth, '#f00');
  if (!vertical) add(svg, 'path', { d: 'M896 16h5l-2.500 4z', fill: '#d44' });
}

function drawAll() {
  drawRuler(document.getElementById('ruler-h'), false);
  drawRuler(document.getElementById('ruler-v'), true);
}
drawAll();
addEventListener('resize', drawAll);
```
